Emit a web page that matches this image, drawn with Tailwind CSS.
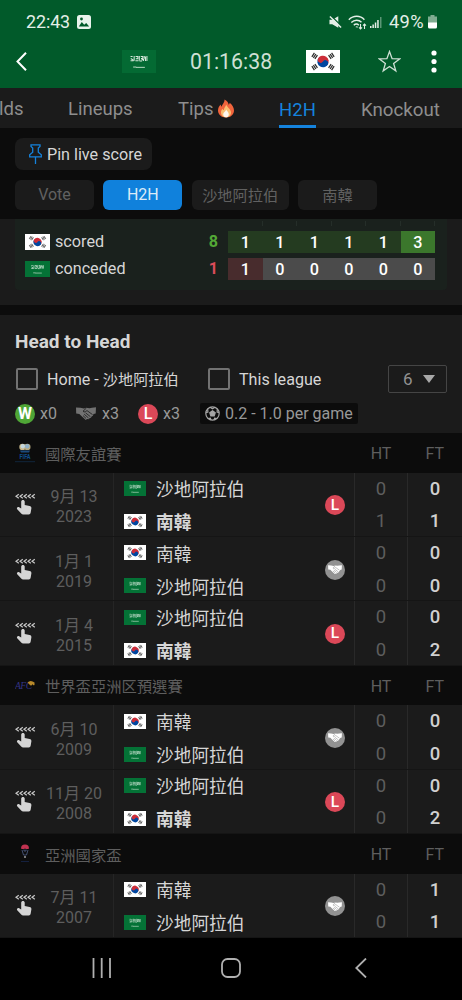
<!DOCTYPE html>
<html lang="zh-Hant">
<head>
<meta charset="utf-8">
<title>Head to Head</title>
<script src="https://cdn.jsdelivr.net/npm/@tailwindcss/browser@4"></script>
</head>
<body class="w-[462px] h-[1000px] overflow-hidden bg-black font-[Roboto,'Noto_Sans_CJK_TC',sans-serif] text-[#d6d6d6] whitespace-nowrap">
<svg class="hidden">
  <symbol id="saText" viewBox="0 0 33 22">
    <path d="M8.300 6.300h2M8.500 8.200l2.500 1.500M8.300 10.300h3M11.800 5.800v4.500M13.200 6.300h2.200v2h-2M13 10.200h3M16.800 5.800v4.200M17 10.500h2.500M18.200 6.300h2v1.900h-1.800M20.800 8.800v1.700M21.600 5.800v2.500M22.800 6.300v4.200M24.200 5.800v4.700M19 9.200h2.500" fill="none" stroke="#d4e8da" stroke-width="1"/>
    <path d="M10.800 16.300h3M13.500 16.600h8.700" stroke="#c4e0cc" stroke-width=".9"/>
  </symbol>
  <symbol id="sa" viewBox="0 0 33 22">
    <rect width="33" height="22" fill="#047236"/>
    <use href="#saText" width="33" height="22"/>
  </symbol>
  <symbol id="kr" viewBox="0 0 36 24">
    <rect width="36" height="24" fill="#fff"/>
    <g transform="rotate(33.7 18 12)">
      <path d="M12 12a6 6 0 0 1 12 0z" fill="#cd2e3a"/>
      <path d="M12 12a6 6 0 0 0 12 0z" fill="#0047a0"/>
      <circle cx="15" cy="12" r="3" fill="#cd2e3a"/>
      <circle cx="21" cy="12" r="3" fill="#0047a0"/>
    </g>
    <g stroke="#2c2c2c" stroke-width="1.300">
      <path id="tg" d="M6.200 7.600l2.700-4M7.800 8.700l2.700-4M9.400 9.800l2.700-4" transform="translate(0 -.5)"/>
      <use href="#tg" transform="rotate(180 18 12)"/>
      <use href="#tg" transform="matrix(-1 0 0 1 36 0)"/>
      <use href="#tg" transform="matrix(1 0 0 -1 0 24)"/>
    </g>
  </symbol>
  <symbol id="shake" viewBox="0 0 20 13">
    <path d="M0 .5l4.500.3L8 1.600l2.300-.9 3.200.5L16 .8l4-.5-.3 6.200-2.200.6-.6 1.700-1.300.7-.6 1.200-1.500.5-.9 1-1.600-.1-1.300.8L6.500 10 3.300 6.900.2 6.500z"/>
    <path d="M10.300 1.200L7 4.200q.8 1.400 2.500.4l1.500-1 5.500 4M9.600 5.900l4.800 3.800M8.200 7.200l4.300 3.800M7 8.600l3 2.800" fill="none" stroke="var(--cut)" stroke-width=".8"/>
  </symbol>
  <symbol id="swipe" viewBox="0 0 21 23">
    <path d="M3.800 1.300L1 3.300l2.800 2M7.800 1.300L5 3.300l2.800 2M11.800 1.300L9 3.300l2.800 2M15.800 1.300L13 3.300l2.800 2M19.800 1.300L17 3.300l2.800 2" fill="none" stroke="#c8c8c8" stroke-width="1.200"/>
    <path d="M6.200 8.600c0-2.200 3.500-2.200 3.500 0v3.300l4.900 1.100c1.300.3 1.900 1 1.800 2.200l-.7 4.300c-.2 1.300-.9 2-2 2H8.200c-.8 0-1.500-.3-2-.9l-4-4.400c-1-1.400.7-2.800 2-2l2 1.200z" fill="#d4d4d4"/>
  </symbol>
</svg>

<header class="h-[88px] bg-[#015a2a]">
  <div class="flex h-11 items-center pl-[26px] pr-[25px] text-[#e4efe7]">
    <span class="text-[17.900px] tracking-[-.1px]">22:43</span>
    <svg class="ml-[7px] size-[14px]" viewBox="0 0 14 14"><rect width="14" height="14" rx="2.500" fill="#e9f3ec"/><path d="M1.800 11.500l3-4.500 2.400 2.800 2-1.800 3 3.500z" fill="#015a2a"/><circle cx="4.500" cy="4" r="1.400" fill="#015a2a"/></svg>
    <svg class="ml-auto h-[14px] w-[13px]" viewBox="0 0 14 14"><path d="M.5 4.500h3L10 .8v12.400L3.500 9.500h-3z" fill="#e4efe7"/><path d="M1.500 -.5l12 12" stroke="#015a2a" stroke-width="1.400"/><path d="M1 1l12 12" stroke="#e4efe7" stroke-width="1.600"/></svg>
    <svg class="ml-[6px] h-[15px] w-[19px]" viewBox="0 0 19 15" fill="none" stroke="#e4efe7" stroke-width="1.400"><path d="M.8 4.700c4.500-4.600 11.500-4.600 15.600 0M3.300 7.500c3-3 7.600-3 10.200-.2M5.800 10.200c1.500-1.600 3.600-1.600 5 0"/><path d="M7.300 12l2-1 .5 1.800z" fill="#e4efe7" stroke="none"/><path d="M12.500 9v4.800M11 12.300l1.500 1.700 1.500-1.700M16.500 14V9M15 10.700l1.500-1.700 1.500 1.700" stroke-width="1.100"/></svg>
    <svg class="ml-[3px] h-[13px] w-[12px]" viewBox="0 0 12 13" fill="#e4efe7"><path d="M0 10h1.500v2H0zM2.400 8.500h1.500V12H2.400zM4.800 6.500h1.500V12H4.800zM7.200 4h1.500v8H7.200z"/><path d="M10 1h1.500v11H10z" opacity=".4"/></svg>
    <span class="ml-[7px] w-[35px] text-[18.300px] tracking-[.3px]">49%</span>
    <svg class="ml-[4px] h-[14px] w-[9px]" viewBox="0 0 9 14"><path d="M2.500 0h4v1.500H9V8H0V1.500h2.500z" fill="#7fac90"/><path d="M0 7.500h9V12q0 1.500-1.500 1.500h-6Q0 13.500 0 12z" fill="#fff"/></svg>
  </div>
  <div class="flex h-[35px] items-center pl-4">
    <svg class="h-[19px] w-[11px]" viewBox="0 0 11 19"><path d="M10 .8L1.500 9.500l8.500 8.700" fill="none" stroke="#fff" stroke-width="2"/></svg>
    <svg class="ml-[95px] h-[23px] w-[34px] bg-[#046a33]" preserveAspectRatio="none" viewBox="0 0 33 22"><use href="#saText" width="33" height="22"/></svg>
    <span class="ml-[34px] w-[84px] text-[21.300px] text-[#cfe0d5]">01:16:38</span>
    <svg class="ml-8 h-[23px] w-[34px]" viewBox="0 0 36 24" preserveAspectRatio="none"><use href="#kr" width="36" height="24"/></svg>
    <svg class="ml-[38px] size-[23px]" viewBox="0 0 23 23"><path d="M11.500 1.500l2.600 7.200 7.500.2-6 4.600 2.200 7.400-6.300-4.400-6.300 4.400 2.200-7.400-6-4.600 7.500-.2z" fill="none" stroke="#cfe0d5" stroke-width="1.300"/></svg>
    <svg class="ml-[30px] h-[23px] w-[6px]" viewBox="0 0 6 23" fill="#fff"><circle cx="3" cy="3" r="2.600"/><circle cx="3" cy="11.500" r="2.600"/><circle cx="3" cy="20" r="2.600"/></svg>
  </div>
</header>

<nav class="flex h-10 items-center bg-[#1b1b1b] text-[18.500px] text-[#8e8e8e]">
  <span class="-ml-px w-[69px] pt-[4px]">lds</span>
  <span class="w-[110px] pt-[4px]">Lineups</span>
  <span class="w-[37px] pt-[4px]">Tips</span>
  <svg class="ml-[3px] mt-[1px] h-[19px] w-[16px]" viewBox="0 0 16 18"><path d="M6.500 0c3 1.500 4 3.500 4.200 5.300.7-.5 1-1.300 1-2C14.500 5.500 16 8.500 16 11c0 4.200-3.500 7-8 7s-8-2.800-8-7c0-2.600 1.300-4.600 2.600-6 .1 1 .5 1.800 1.200 2.200C4 4.500 6.700 3.500 6.500 0z" fill="#f0643c"/><path d="M8.300 5c.3 2.600 4.700 4.500 4.700 8 0 3-2.200 4.800-5 4.800S3 16 3 13c0-1.800.8-3 1.600-3.800.2.900.7 1.300 1.300 1.400C5.800 8.500 7.300 7.500 8.300 5z" fill="#fbbf72"/><path d="M8.200 10c.3 1.600 2.600 2.500 2.600 4.700 0 1.900-1.200 3.100-2.800 3.100s-2.800-1.200-2.800-3c0-2 2.400-2.600 3-4.800z" fill="#fff8ef"/></svg>
  <span class="ml-[45px] flex h-10 w-[37px] items-center justify-center border-b-[3px] border-[#1583dd] pt-[8px] text-[#1583dd]">H2H</span>
  <span class="ml-[45px] pt-[4px] text-[18.700px]">Knockout</span>
</nav>

<section class="h-[91px] bg-[#0c0c0c] px-[15px] pt-[10px]">
  <button class="flex h-8 w-[137px] items-center rounded-lg bg-[#1b1b1b] pl-[14px] text-[16.150px]">
    <svg class="mr-[5px] h-[20px] w-[13px]" viewBox="0 0 13 20" fill="none" stroke="#1583dd" stroke-width="1.300"><path d="M2 .8h9v1.700L9.300 4v4.200l3 2.600v2H.7v-2l3-2.600V4L2 2.500zM6.500 13v7"/></svg>
    <span class="pt-[2px]">Pin live score</span>
  </button>
  <div class="mt-[10px] flex gap-[9.300px] text-[16px] text-[#616161]">
    <span class="flex h-[30px] w-[79px] items-center justify-center rounded-md bg-[#1b1b1b]">Vote</span>
    <span class="flex h-[30px] w-[79px] items-center justify-center rounded-md bg-[#1081dc] text-[#dcebf8]">H2H</span>
    <span class="flex h-[30px] w-[97px] items-center justify-center rounded-md bg-[#1b1b1b] pt-[2px] text-[15.200px]">沙地阿拉伯</span>
    <span class="flex h-[30px] w-[79px] items-center justify-center rounded-md bg-[#1b1b1b] pt-[2px] text-[15.200px]">南韓</span>
  </div>
</section>

<section class="h-[86px] bg-[#1b1b1b] px-[15px]">
  <div class="flex h-[71px] flex-col rounded-b bg-[#1a211d] pl-[10px] pr-3 text-[16.200px]">
    <div class="flex h-3 shrink-0 pl-[203px] pt-[2px]">
      <div class="grid h-[5px] w-[207px] grid-cols-6"><i class="border-r border-[#252e29]"></i><i class="border-r border-[#252e29]"></i><i class="border-r border-[#252e29]"></i><i class="border-r border-[#252e29]"></i><i class="border-r border-[#252e29]"></i><i class="border-r border-[#252e29]"></i></div>
    </div>
    <div class="flex h-[22px] items-center">
      <svg class="h-4 w-[25px]" viewBox="0 0 36 24" preserveAspectRatio="none"><use href="#kr" width="36" height="24"/></svg>
      <span class="ml-[5px] w-[151px] pt-px">scored</span>
      <b class="w-[15px] text-center text-[#53a836]">8</b>
      <div class="ml-[7px] grid h-[22px] w-[207px] grid-cols-6 bg-[#243b20] text-center font-medium leading-[23px] text-white"><span>1</span><span>1</span><span>1</span><span>1</span><span>1</span><span class="h-[22px] bg-[#3b772c]">3</span></div>
    </div>
    <div class="mt-[5px] flex h-[22px] items-center">
      <svg class="h-4 w-[25px]" viewBox="0 0 33 22" preserveAspectRatio="none"><use href="#sa" width="33" height="22"/></svg>
      <span class="ml-[5px] w-[151px] pt-px">conceded</span>
      <b class="w-[15px] text-center text-[#dc4c5a]">1</b>
      <div class="ml-[7px] grid h-[22px] w-[207px] grid-cols-6 bg-[#4b4b4b] text-center font-medium leading-[23px] text-white"><span class="h-[22px] bg-[#482c2d]">1</span><span>0</span><span>0</span><span>0</span><span>0</span><span>0</span></div>
    </div>
  </div>
</section>
<div class="h-[10px] bg-[#0c0c0c]"></div>

<section class="h-[118px] bg-[#1b1b1b] px-[15px] pt-[13px]">
  <h2 class="h-7 text-[19px] font-bold leading-7">Head to Head</h2>
  <div class="mt-[9px] flex h-7 items-center pl-px text-[16.100px]">
    <i class="size-[22px] rounded-[2px] border-2 border-[#727272]"></i>
    <span class="ml-[9px] flex w-[161px] items-center pt-[2px]">Home -<span class="ml-[4px] text-[15.200px] pt-px">沙地阿拉伯</span></span>
    <i class="size-[22px] rounded-[2px] border-2 border-[#727272]"></i>
    <span class="ml-[9px] pt-[2px]">This league</span>
    <span class="ml-auto flex h-7 w-[59px] items-center rounded-[2px] border border-[#454545] pl-[14px] text-[17px] text-[#929292]"><span class="pt-[2px]">6</span><svg class="ml-[10px] h-2 w-[12px]" viewBox="0 0 12 8"><path d="M0 0h12L6 8z" fill="#a8a8a8"/></svg></span>
  </div>
  <div class="mt-[9px] flex h-[23px] items-center text-[16px] text-[#989898]">
    <span class="flex size-5 items-center justify-center rounded-full bg-[#4fa636] text-[16px] font-bold text-white">W</span>
    <span class="ml-[5px] w-[36px] pt-px">x0</span>
    <svg class="h-[13px] w-5 [--cut:#1b1b1b]" viewBox="0 0 20 13" fill="#727272"><use href="#shake" width="20" height="13"/></svg>
    <span class="ml-[6px] w-[36px] pt-px">x3</span>
    <span class="flex size-5 items-center justify-center rounded-full bg-[#db4858] text-[16px] font-medium text-white">L</span>
    <span class="ml-[5px] w-[37px] pt-px">x3</span>
    <span class="flex h-[21px] w-[158px] items-center rounded-[2px] bg-[#0c0c0c] pl-[5px]"><svg class="mr-[5px] size-[15px]" viewBox="0 0 15 15" fill="none" stroke="#a5a5a5" stroke-width="1.200"><circle cx="7.500" cy="7.500" r="6.700"/><path d="M7.500 4.800l2.700 2-1 3.100H5.800l-1-3.100z" fill="#a5a5a5"/><path d="M5 1.300l2.500 1.500L10 1.300M.9 6.700l2-.7-.2-3M14.100 6.700l-2-.7.2-3M3 12.500l2.400-.3.500 2M12 12.500l-2.400-.3-.5 2"/></svg><span class="pt-px">0.2 - 1.0 per game</span></span>
  </div>
</section>

<main id="list" class="h-[505px] overflow-hidden"></main>

<footer class="flex h-[62px] items-center bg-black pb-[2px]">
  <svg class="ml-[92px] h-5 w-[19px]" viewBox="0 0 19 20"><path d="M1.500 0v20M9.700 0v20M18 0v20" stroke="#b0b0b0" stroke-width="1.800"/></svg>
  <svg class="ml-[110px] size-5" viewBox="0 0 20 20"><rect x="1" y="1" width="18" height="18" rx="5.500" fill="none" stroke="#b0b0b0" stroke-width="1.800"/></svg>
  <svg class="ml-[114px] h-5 w-[12px]" viewBox="0 0 12 20"><path d="M11 .5L1.300 10l9.700 9.500" fill="none" stroke="#b0b0b0" stroke-width="1.800"/></svg>
</footer>

<script>
const KR = ['南韓', '<svg class="h-[15px] w-[22px] shrink-0" viewBox="0 0 36 24" preserveAspectRatio="none"><use href="#kr" width="36" height="24"/></svg>'];
const SA = ['沙地阿拉伯', '<svg class="h-[15px] w-[22px] shrink-0" viewBox="0 0 33 22" preserveAspectRatio="none"><use href="#sa" width="33" height="22"/></svg>'];
const LOSS = '<span class="mt-[2px] flex size-5 items-center justify-center self-center rounded-full bg-[#db4858] text-[15.500px] font-medium text-white">L</span>';
const DRAW = '<span class="mt-[2px] flex size-5 items-center justify-center self-center rounded-full bg-[#929292]"><svg class="h-[9px] w-[14px] [--cut:#929292]" viewBox="0 0 20 13" fill="#fff"><use href="#shake" width="20" height="13"/></svg></span>';
const FIFA = '<svg class="size-5" viewBox="0 0 20 20"><circle cx="7.500" cy="3.900" r="3.200" fill="#c9b98c"/><circle cx="12.300" cy="3.900" r="3.200" fill="#b9ab80"/><circle cx="7.800" cy="3.300" r="2.200" fill="#c4d6dc"/><circle cx="12.200" cy="3.300" r="2.200" fill="#8fb0c8"/><path d="M5 7.500h10l-1 2H6z" fill="#1c4a7c"/><text x="10" y="16" font-size="6.500" font-weight="700" text-anchor="middle" fill="#0f4d8c" textLength="11" lengthAdjust="spacingAndGlyphs">FIFA</text><path d="M0 18.700h20" stroke="#10263c" stroke-width="1"/></svg>';
const AFC = '<svg class="size-5" viewBox="0 0 20 20"><text x="0" y="13.500" font-size="9.500" font-style="italic" font-family="Liberation Serif" fill="#343488" textLength="17">AFC</text><path d="M12.500 7.500q3-3 7 0v2.500q-1.500 1-2-1-1 2.500-2.500 1z" fill="#b8892a"/></svg>';
const CUP = '<svg class="size-5" viewBox="0 0 20 20"><path d="M6 4.500Q6 .5 10 .5t4 4q-2 1-4 0-2 1-4 0z" fill="#c03250"/><path d="M7 6l1.500 5h3L13 6M9 5.500v1.500h2V5.500" fill="none" stroke="#51618a" stroke-width=".8"/><path d="M9 12h2v2H9z" fill="#777"/><path d="M6 17.500h8" stroke="#14203e"/></svg>';

const head = (logo, name) => `<div class="flex h-[39.700px] items-center bg-[#0c0c0c] pl-[15px] text-[#5e5e5e]">
  <span class="w-[30px]">${logo}</span><span class="flex-1 pt-[5px] text-[15.300px]">${name}</span>
  <span class="w-[53px] pt-[3px] text-center text-[16px]">HT</span><span class="w-[54.500px] pt-[3px] text-center text-[16px]">FT</span></div>`;

const row = (d, y, a, b, res, ht, ft) => `<div class="flex h-[64.300px] border-b border-[#151515] bg-[#1b1b1b]">
  <div class="flex w-[36px] items-center pl-[15px] pt-[1px]"><svg class="h-[23px] w-[21px] shrink-0" viewBox="0 0 21 23"><use href="#swipe" width="21" height="23"/></svg></div>
  <div class="flex w-[78px] flex-col items-center justify-center border-r border-[#252525] pr-[1px] pt-[6px] text-[16px] leading-[20px] text-[#5e5e5e]"><span>${d}</span><span>${y}</span></div>
  <div class="flex w-[241px] items-start border-r border-[#292929] pl-[10px] pr-[9px]">
    <div class="flex flex-1 flex-col text-[17.700px]">
      <div class="flex h-[32px] items-center gap-[10px]">${a[1]}<span class="pt-[4px]">${a[0]}</span></div>
      <div class="flex h-[34px] items-center gap-[10px]">${b[1]}<span class="pt-[4px] ${res === LOSS ? 'font-bold' : 'font-normal'}">${b[0]}</span></div>
    </div>${res}
  </div>
  <div class="grid w-[53px] grid-rows-[32px_33px] place-items-center border-r border-[#292929] pt-px text-[18.500px] text-[#5e5e5e]"><span>${ht[0]}</span><span>${ht[1]}</span></div>
  <div class="grid w-[54px] grid-rows-[32px_33px] place-items-center pt-px text-[18.500px] font-medium text-[#d0d0d0]"><span>${ft[0]}</span><span>${ft[1]}</span></div>
</div>`;

document.getElementById('list').innerHTML =
  head(FIFA, '國際友誼賽') +
  row('9月 13', '2023', SA, KR, LOSS, '01', '01') +
  row('1月 1', '2019', KR, SA, DRAW, '00', '00') +
  row('1月 4', '2015', SA, KR, LOSS, '00', '02') +
  head(AFC, '世界盃亞洲区預選賽') +
  row('6月 10', '2009', KR, SA, DRAW, '00', '00') +
  row('11月 20', '2008', SA, KR, LOSS, '00', '02') +
  head(CUP, '亞洲國家盃') +
  row('7月 11', '2007', KR, SA, DRAW, '00', '11');
</script>
</body>
</html>
